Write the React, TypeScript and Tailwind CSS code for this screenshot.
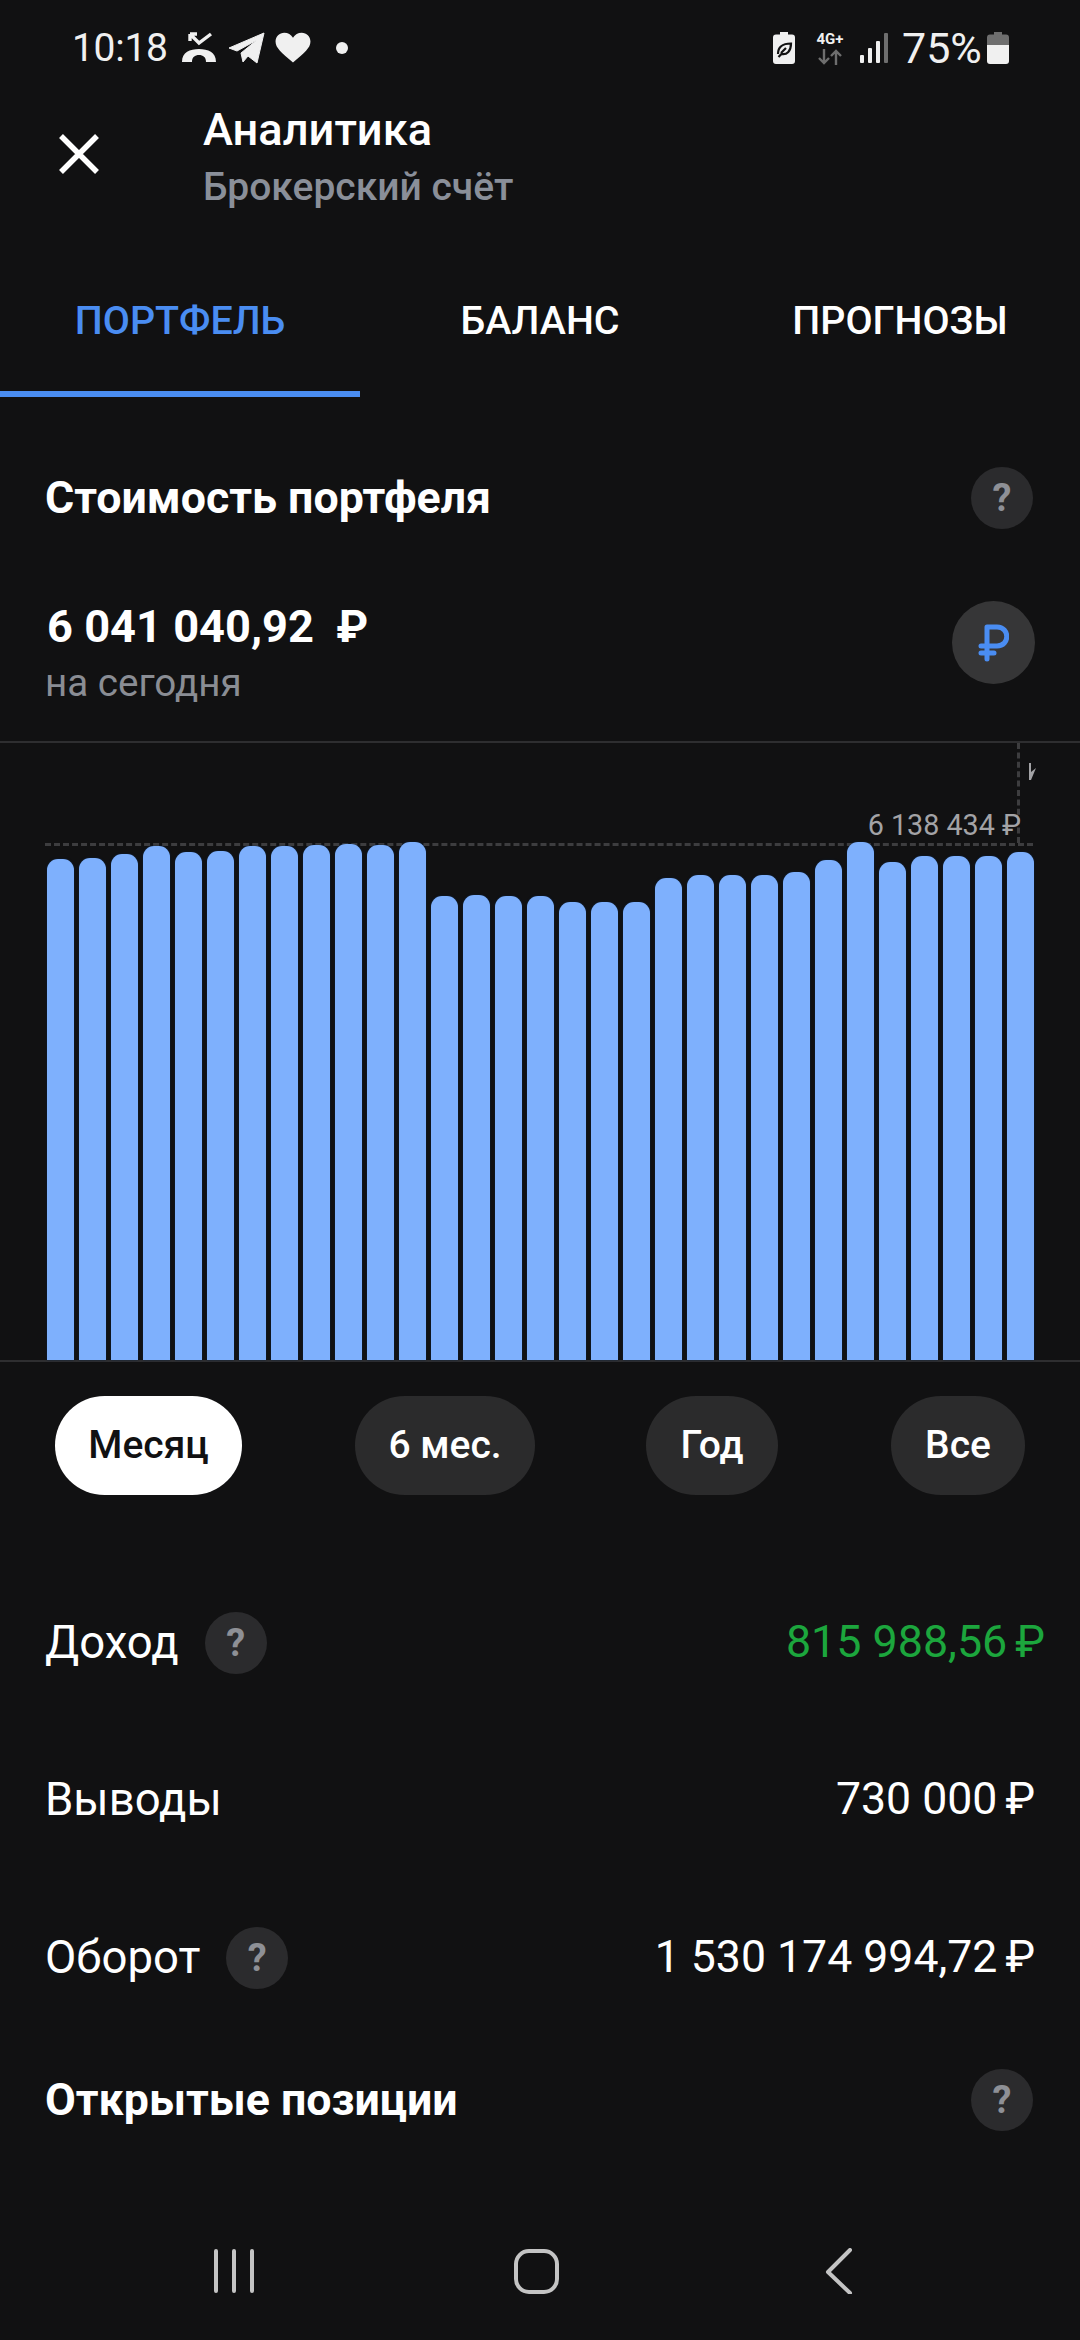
const tops = [860,859,855,847,853,852,847,847,846,845,846,843,897,896,897,897,903,903,903,879,876,876,876,873,861,843,863,857,857,857,853];

function Q({ className = "" }: { className?: string }) {
  return (
    <div className={"w-[62px] h-[62px] rounded-full bg-[#2b2b2d] flex items-center justify-center text-[#8e9096] text-[38px] font-bold leading-none " + className}>?</div>
  );
}

function StatusLeft() {
  return (
    <div className="flex items-center">
      <span className="ml-[72px] w-[98px] text-[39px] leading-none text-[#f0f0f0] tracking-[-0.3px]">10:18</span>
      <svg className="ml-[11px]" width="36" height="32" viewBox="0 0 36 32" fill="none">
        <path d="M9 2 L18 11 L30 2 M9 2 H16 M9 2 V9" stroke="#f0f0f0" strokeWidth="3.4" />
        <path d="M1 30 C1 20 9 17 18 17 C27 17 35 20 35 30 L25 30 C25 25 22 23 18 23 C14 23 11 25 11 30 Z" fill="#f0f0f0" />
      </svg>
      <svg className="ml-[11px]" width="38" height="32" viewBox="0 0 38 32">
        <path d="M1 16 L36 1 L29 31 L20 24 L15 30 L13 21 L29 8 L9 19 Z" fill="#f0f0f0" strokeLinejoin="round" stroke="#f0f0f0" strokeWidth="1" />
      </svg>
      <svg className="ml-[9px]" width="36" height="32" viewBox="0 0 24 22">
        <path d="M12 21 C4 14 0 11 0 6.5 C0 3 2.7 .5 6 .5 C8.5 .5 10.8 1.8 12 4 C13.2 1.8 15.5 .5 18 .5 C21.3 .5 24 3 24 6.5 C24 11 20 14 12 21 Z" fill="#f0f0f0" />
      </svg>
      <div className="ml-[25px] w-[12px] h-[12px] rounded-full bg-[#f0f0f0]" />
    </div>
  );
}

function StatusRight() {
  return (
    <div className="flex items-center">
      <svg width="22" height="32" viewBox="0 0 22 32">
        <path d="M7 0 H15 V2.5 H19 Q22 2.5 22 5.5 V29 Q22 32 19 32 H3 Q0 32 0 29 V5.5 Q0 2.5 3 2.5 H7 Z" fill="#f0f0f0" />
        <path d="M5 22 C5 15 10 11.5 18 11.5 C18 19 14 23 8.5 22 L5.5 25 M8 21 L13 16" stroke="#111112" strokeWidth="2.2" fill="none" />
      </svg>
      <div className="ml-[18px] w-[34px] flex flex-col items-center">
        <span className="text-[15px] font-bold leading-[15px] text-[#f0f0f0] whitespace-nowrap">4G+</span>
        <svg className="mt-[2px]" width="26" height="16" viewBox="0 0 26 16" fill="none" stroke="#6e6e6e" strokeWidth="2.4">
          <path d="M7 0 V14 M2 9 L7 14 L12 9 M19 16 V2 M14 7 L19 2 L24 7" />
        </svg>
      </div>
      <svg className="ml-[13px]" width="28" height="30" viewBox="0 0 28 30">
        <rect x="0" y="22" width="4" height="8" rx="1" fill="#f0f0f0" />
        <rect x="8" y="15" width="4" height="15" rx="1" fill="#f0f0f0" />
        <rect x="16" y="8" width="4" height="22" rx="1" fill="#f0f0f0" />
        <rect x="24" y="0" width="4" height="30" rx="1" fill="#6e6e6e" />
      </svg>
      <span className="ml-[14px] w-[78px] text-[43px] leading-none text-[#f0f0f0] whitespace-nowrap">75%</span>
      <svg className="ml-[7px]" width="22" height="32" viewBox="0 0 22 32">
        <path d="M7 0 H15 V2.5 H19 Q22 2.5 22 5.5 V13 H0 V5.5 Q0 2.5 3 2.5 H7 Z" fill="#6e6e6e" />
        <path d="M0 13 H22 V29 Q22 32 19 32 H3 Q0 32 0 29 Z" fill="#f0f0f0" />
      </svg>
    </div>
  );
}

function Row({ label, value, q, valueClass, h, qClass }: { label: string; value: string; q?: boolean; valueClass: string; h: string; qClass?: string }) {
  return (
    <div className={"flex items-center justify-between pl-[45px] " + h}>
      <div className="flex items-center">
        <span className="text-[45.5px] text-white leading-none">{label}</span>
        {q && <Q className={qClass} />}
      </div>
      <span className={"leading-none whitespace-nowrap " + valueClass}>
        {value}
        <span className="ml-[8px]">₽</span>
      </span>
    </div>
  );
}

export default function App() {
  return (
    <div className="w-[1080px] h-[2340px] bg-[#111112] overflow-hidden flex flex-col font-['Roboto',sans-serif]">
      <div className="h-[96px] flex items-center justify-between pr-[71px] shrink-0">
        <StatusLeft />
        <StatusRight />
      </div>

      <div className="h-[150px] flex shrink-0">
        <svg className="ml-[59px] mt-[38px]" width="40" height="40" viewBox="0 0 40 40" stroke="#fff" strokeWidth="5.5" fill="none">
          <path d="M2 2 L38 38 M38 2 L2 38" />
        </svg>
        <div className="ml-[104px] flex flex-col">
          <span className="text-[45.2px] font-medium text-white leading-[50px] mt-[9px]">Аналитика</span>
          <span className="text-[39px] font-medium text-[#8a8f99] leading-[44px] mt-[10px]">Брокерский счёт</span>
        </div>
      </div>

      <div className="h-[151px] flex shrink-0">
        <div className="w-[360px] flex items-center justify-center text-[39.4px] font-medium text-[#4a8df2] border-b-[6px] border-[#4a8df2] pt-[4px]">ПОРТФЕЛЬ</div>
        <div className="w-[360px] flex items-center justify-center text-[39.4px] font-medium text-white pb-[2px]">БАЛАНС</div>
        <div className="w-[360px] flex items-center justify-center text-[39.4px] font-medium text-white pb-[2px]">ПРОГНОЗЫ</div>
      </div>

      <div className="h-[344px] pl-[45px] pr-[47px] shrink-0 flex flex-col">
        <div className="flex items-center justify-between mt-[70px]">
          <span className="text-[44.7px] font-bold text-white leading-none">Стоимость портфеля</span>
          <Q />
        </div>
        <div className="flex items-start justify-between mt-[75px]">
          <div className="flex flex-col">
            <span className="ml-[2px] text-[45.2px] font-bold text-white leading-none whitespace-pre">6 041 040,92  ₽</span>
            <span className="text-[38.6px] text-[#8a8d94] leading-none mt-[15px]">на сегодня</span>
          </div>
          <div className="-mt-[3px] -mr-[2px] w-[83px] h-[83px] rounded-full bg-[#363637] flex items-center justify-center">
            <svg width="31" height="38" viewBox="0 0 31 38" fill="none" stroke="#4a8df2" strokeWidth="5" strokeLinecap="round" strokeLinejoin="round">
              <path d="M9 35 V3 H19 C32 3 32 22 19 22 H3 M3 29 H16" />
            </svg>
          </div>
        </div>
      </div>

      <div className="relative h-[621px] border-y-2 border-[#2e2e30] shrink-0 flex items-end pl-[47px] gap-[5px]">
        <div className="absolute left-[45px] top-[100px] w-[988px] border-t-[3px] border-dashed border-[#3d3d3f]" />
        <div className="absolute left-[1017px] top-0 h-[100px] border-l-[3px] border-dashed border-[#3d3d3f]" />
        {tops.map((t, i) => (
          <div key={i} className="relative w-[27px] bg-[#7eb0fd] rounded-t-[11px] shadow-[0_0_2px_#0b2240]" style={{ height: 1361 - t }} />
        ))}
        <span className="absolute right-[59px] top-[68px] text-[28.7px] leading-none text-[#a3a3a6] whitespace-nowrap">6 138 434 ₽</span>
        <svg className="absolute left-[1028px] top-[20px]" width="8" height="17" viewBox="0 0 8 17">
          <path d="M1 0 H3 V9 L8 5 L3 17 H1 Z" fill="#a3a3a6" />
        </svg>
      </div>

      <div className="relative flex items-center mt-[34px] h-[99px] shrink-0 pl-[55px]">
        <div className="w-[187px] h-[99px] rounded-full bg-white flex items-center justify-center text-[39px] font-medium text-[#111112]">Месяц</div>
        <div className="ml-[113px] w-[180px] h-[99px] rounded-full bg-[#2b2b2c] flex items-center justify-center text-[39px] font-medium text-white">6 мес.</div>
        <div className="ml-[111px] w-[132px] h-[99px] rounded-full bg-[#2b2b2c] flex items-center justify-center text-[39px] font-medium text-white">Год</div>
        <div className="ml-[113px] w-[134px] h-[99px] rounded-full bg-[#2b2b2c] flex items-center justify-center text-[39px] font-medium text-white">Все</div>
      </div>

      <div className="flex flex-col mt-[95px] shrink-0">
        <div className="pr-[35px]"><Row h="h-[105px]" label="Доход" value="815 988,56" q qClass="ml-[26px]" valueClass="text-[44.8px] text-[#1ca63d]" /></div>
        <div className="pr-[45px] mt-[52px]"><Row h="h-[105px]" label="Выводы" value="730 000" valueClass="text-[44.6px] text-white" /></div>
        <div className="pr-[45px] mt-[53px]"><Row h="h-[105px]" label="Оборот" value="1 530 174 994,72" q qClass="ml-[26px]" valueClass="text-[44.6px] text-white" /></div>
      </div>

      <div className="flex items-center justify-between pl-[45px] pr-[47px] mt-[59px] shrink-0">
        <span className="text-[44.7px] font-bold text-white leading-none">Открытые позиции</span>
        <Q />
      </div>

      <div className="flex-1 relative">
        <svg className="absolute left-0 bottom-[46px]" width="1080" height="46" viewBox="0 0 1080 46" fill="none" stroke="#c4c4c4" strokeWidth="4" strokeLinecap="round" strokeLinejoin="round">
          <path d="M216 3 V43 M234 3 V43 M252 3 V43" />
          <rect x="516" y="3" width="41" height="41" rx="13" />
          <path d="M850 2 L828 24 L850 45" />
        </svg>
      </div>
    </div>
  );
}
